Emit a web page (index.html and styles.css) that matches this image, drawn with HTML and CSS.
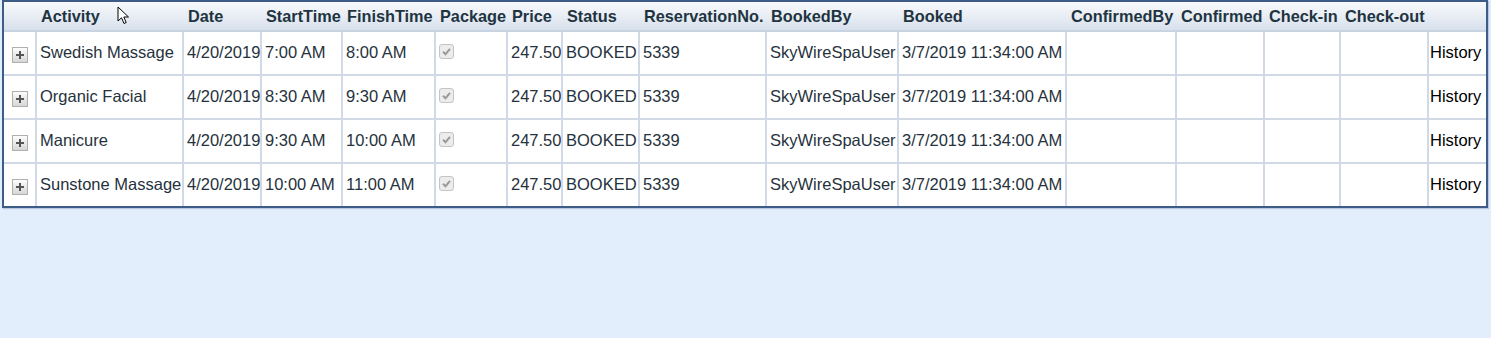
FILE: index.html
```html
<!DOCTYPE html>
<html>
<head>
<meta charset="utf-8">
<link rel="stylesheet" href="styles.css">
</head>
<body>
<div class="page">
  <table class="grid">
    <colgroup>
      <col style="width:33px"><col style="width:147px"><col style="width:78px"><col style="width:81px">
      <col style="width:93px"><col style="width:72px"><col style="width:55px"><col style="width:77px">
      <col style="width:127px"><col style="width:132px"><col style="width:168px"><col style="width:110px">
      <col style="width:88px"><col style="width:76px"><col style="width:88px"><col style="width:57px">
    </colgroup>
    <thead>
      <tr>
        <th></th><th>Activity</th><th>Date</th><th>StartTime</th><th>FinishTime</th><th>Package</th><th>Price</th><th>Status</th><th>ReservationNo.</th><th>BookedBy</th><th>Booked</th><th>ConfirmedBy</th><th>Confirmed</th><th>Check-in</th><th>Check-out</th><th></th>
      </tr>
    </thead>
    <tbody>
      <tr>
        <td class="exp"><span class="plus"></span></td><td>Swedish Massage</td><td>4/20/2019</td><td>7:00 AM</td><td>8:00 AM</td>
        <td><span class="chk"><svg viewBox="0 0 13 13" width="13" height="13"><path d="M3 6.8 L5.5 9.2 L10 3.8" fill="none" stroke="#9a9a9a" stroke-width="2"/></svg></span></td>
        <td>247.50</td><td>BOOKED</td><td>5339</td><td>SkyWireSpaUser</td><td>3/7/2019 11:34:00 AM</td><td></td><td></td><td></td><td></td><td class="hist">History</td>
      </tr>
      <tr>
        <td class="exp"><span class="plus"></span></td><td>Organic Facial</td><td>4/20/2019</td><td>8:30 AM</td><td>9:30 AM</td>
        <td><span class="chk"><svg viewBox="0 0 13 13" width="13" height="13"><path d="M3 6.8 L5.5 9.2 L10 3.8" fill="none" stroke="#9a9a9a" stroke-width="2"/></svg></span></td>
        <td>247.50</td><td>BOOKED</td><td>5339</td><td>SkyWireSpaUser</td><td>3/7/2019 11:34:00 AM</td><td></td><td></td><td></td><td></td><td class="hist">History</td>
      </tr>
      <tr>
        <td class="exp"><span class="plus"></span></td><td>Manicure</td><td>4/20/2019</td><td>9:30 AM</td><td>10:00 AM</td>
        <td><span class="chk"><svg viewBox="0 0 13 13" width="13" height="13"><path d="M3 6.8 L5.5 9.2 L10 3.8" fill="none" stroke="#9a9a9a" stroke-width="2"/></svg></span></td>
        <td>247.50</td><td>BOOKED</td><td>5339</td><td>SkyWireSpaUser</td><td>3/7/2019 11:34:00 AM</td><td></td><td></td><td></td><td></td><td class="hist">History</td>
      </tr>
      <tr>
        <td class="exp"><span class="plus"></span></td><td>Sunstone Massage</td><td>4/20/2019</td><td>10:00 AM</td><td>11:00 AM</td>
        <td><span class="chk"><svg viewBox="0 0 13 13" width="13" height="13"><path d="M3 6.8 L5.5 9.2 L10 3.8" fill="none" stroke="#9a9a9a" stroke-width="2"/></svg></span></td>
        <td>247.50</td><td>BOOKED</td><td>5339</td><td>SkyWireSpaUser</td><td>3/7/2019 11:34:00 AM</td><td></td><td></td><td></td><td></td><td class="hist">History</td>
      </tr>
    </tbody>
  </table>
  <svg class="cursor" width="14" height="20" viewBox="0 0 14 20"><path d="M1 1 L1 15 L4.5 11.8 L7 17.5 L9.2 16.5 L6.8 11 L11.5 11 Z" fill="#fff" stroke="#000" stroke-width="1" stroke-linejoin="round"/></svg>
</div>
</body>
</html>
```

FILE: styles.css
```css
html, body {
  margin: 0;
  padding: 0;
  background: #e3eefc;
  height: 100%;
}
.page {
  position: relative;
  padding: 0 0 0 2px;
  font-family: "Liberation Sans", Arial, sans-serif;
}
.grid {
  table-layout: fixed;
  width: 1486px;
  border-collapse: separate;
  border-spacing: 0;
  border: 2px solid #3d5d88;
  background: #fff;
  box-shadow: 1px 1px 1px rgba(60, 90, 130, 0.25);
}
.grid th, .grid td {
  box-sizing: border-box;
  white-space: nowrap;
  overflow: hidden;
}
.grid th {
  height: 30px;
  padding: 1px 0 0 4px;
  text-align: left;
  font-size: 16.3px;
  font-weight: bold;
  color: #1f3441;
  background: linear-gradient(to bottom, #f7f9fc 0%, #e9eef5 50%, #d7e0ec 100%);
  border-bottom: 2px solid #c9d4e3;
  vertical-align: middle;
}
.grid td {
  height: 44px;
  padding: 0 0 1px 3px;
  font-size: 16.5px;
  color: #26323d;
  border-right: 2px solid #d1d9e7;
  border-bottom: 2px solid #d1d9e7;
  vertical-align: middle;
}
.grid td:last-child {
  border-right: none;
}
.grid tbody tr:last-child td {
  border-bottom: none;
  height: 42px;
}
.grid td.exp {
  padding: 0;
  text-align: center;
}
.plus {
  display: inline-block;
  position: relative;
  width: 16px;
  height: 16px;
  box-sizing: border-box;
  border: 1px solid #b0b0b0;
  background: linear-gradient(to bottom, #fdfdfd, #d6d6d6);
  vertical-align: middle;
  margin-top: 2px;
}
.plus::before, .plus::after {
  content: "";
  position: absolute;
  background: #555;
}
.plus::before {
  left: 3px;
  top: 6px;
  width: 8px;
  height: 2px;
}
.plus::after {
  left: 6px;
  top: 3px;
  width: 2px;
  height: 8px;
}
.chk {
  display: inline-block;
  width: 15px;
  height: 15px;
  box-sizing: border-box;
  border: 1px solid #c4c4c4;
  border-radius: 3px;
  background: #ececec;
  vertical-align: middle;
  margin-top: -4px;
}
.chk svg {
  display: block;
  margin: 0;
}
.grid td.hist {
  color: #000;
  padding-left: 1px;
}
.cursor {
  position: absolute;
  left: 117px;
  top: 6px;
}
```
